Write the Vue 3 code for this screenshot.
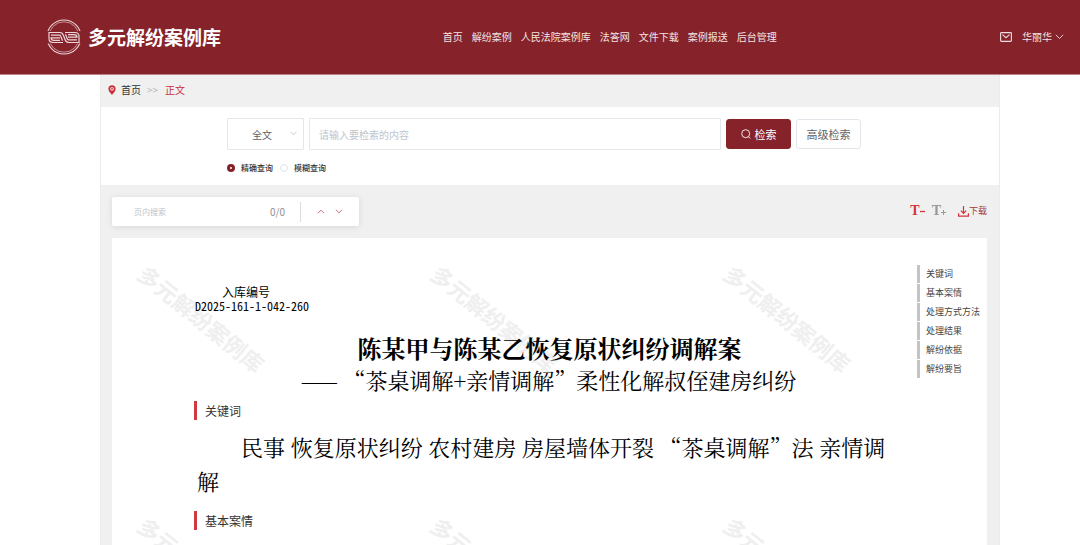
<script setup>
import { ref } from 'vue'

const nav = ['首页', '解纷案例', '人民法院案例库', '法答网', '文件下载', '案例报送', '后台管理']
const toc = ['关键词', '基本案情', '处理方式方法', '处理结果', '解纷依据', '解纷要旨']
const mode = ref('exact')
const keyword = ref('')
const inPage = ref('')
</script>

<template>
  <div class="page">
    <header class="top">
      <a class="brand" href="#">
        <svg class="emblem" viewBox="0 0 36 36" fill="none" stroke="#ecd6d8" aria-hidden="true">
          <circle cx="18" cy="18" r="17" stroke-width="1.1" />
          <circle cx="18" cy="18" r="15.200" stroke-width=".8" opacity=".8" />
          <rect x="0" y="12" width="36" height="12.500" fill="#85222a" stroke="none" />
          <g stroke-width="1.200">
            <path d="M17 23.500H7q-4 0-4-4V13.500h11q2.500 0 3.500 3l1.500 4q1 3 4 3h10v-6q0-4-4-4h-10" />
            <path d="M14 21.300H8q-3 0-3-2.500h9M5 16.200h8.500q1 0 1.500 1.500l1.500 4" />
            <path d="M22 15.700h6q3 0 3 2.500h-9M31 20.800h-8.500q-1 0-1.500-1.500l-1.500-4" />
          </g>
        </svg>
        <span>多元解纷案例库</span>
      </a>
      <nav class="nav">
        <a v-for="n in nav" :key="n" href="#">{{ n }}</a>
      </nav>
      <div class="user">
        <button class="plain" type="button" aria-label="消息">
          <svg width="12" height="10" viewBox="0 0 12 10" fill="none" stroke="#f0dfe0" stroke-width="1.1">
            <rect x=".6" y=".6" width="10.8" height="8.8" rx=".8" />
            <path d="M2.5 2.7 6 5.7l3.500-3" />
          </svg>
        </button>
        <button class="plain account" type="button">
          <span>华丽华</span>
          <svg width="9" height="6" viewBox="0 0 9 6" fill="none" stroke="#e5c8ca"><path d="M.8.8 4.500 4.500 8.200.8" /></svg>
        </button>
      </div>
    </header>

    <main class="main">
      <nav class="crumbs" aria-label="路径">
        <svg width="8" height="10" viewBox="0 0 8 10"><path d="M4 .3a3.600 3.600 0 0 0-3.600 3.600C.4 6.300 4 9.700 4 9.700s3.600-3.400 3.600-5.800A3.600 3.600 0 0 0 4 .3z" fill="#c9303a" /><circle cx="4" cy="3.800" r="1.900" fill="#f3c9cb" /><circle cx="4" cy="3.800" r=".8" fill="#c9303a" /></svg>
        <a href="#">首页</a>
        <span class="sep">&gt;&gt;</span>
        <a class="current" href="#">正文</a>
      </nav>

      <form class="search" @submit.prevent>
        <div class="row">
          <div class="select-wrap">
            <select aria-label="检索范围"><option>全文</option></select>
            <svg width="7" height="5" viewBox="0 0 7 5" fill="none" stroke="#c9ccd2"><path d="M.5.8 3.500 3.800 6.500.8" /></svg>
          </div>
          <input v-model="keyword" class="query" type="text" aria-label="检索内容" placeholder="请输入要检索的内容" />
          <button class="btn primary" type="submit">
            <svg width="10" height="10" viewBox="0 0 10 10" fill="none" stroke="#f5e6e7"><circle cx="4.700" cy="4.700" r="4" /><path d="M7.400 7.600 9.300 9.500" /></svg>
            <span>检索</span>
          </button>
          <button class="btn" type="button">高级检索</button>
        </div>
        <div class="modes">
          <label><input v-model="mode" type="radio" value="exact" name="mode" />精确查询</label>
          <label><input v-model="mode" type="radio" value="fuzzy" name="mode" />模糊查询</label>
        </div>
      </form>

      <section class="body">
        <div class="tools">
          <div class="find">
            <input v-model="inPage" type="text" aria-label="页内搜索" placeholder="页内搜索" />
            <span class="count">0/0</span>
            <button class="plain" type="button" aria-label="上一个"><svg width="8" height="5" viewBox="0 0 8 5" fill="none" stroke="#c4767c"><path d="M.8 4.300 4 1.200l3.200 3.100" /></svg></button>
            <button class="plain" type="button" aria-label="下一个"><svg width="8" height="5" viewBox="0 0 8 5" fill="none" stroke="#c4767c"><path d="M.8.7 4 3.800 7.200.7" /></svg></button>
          </div>
          <div class="actions">
            <button class="plain font minus" type="button" aria-label="缩小字号">T<svg width="5" height="10" viewBox="0 0 5 10" stroke="currentColor" stroke-width="1.300"><path d="M0 5.500h5" /></svg></button>
            <button class="plain font plus" type="button" aria-label="放大字号">T<svg width="5" height="10" viewBox="0 0 5 10" stroke="currentColor"><path d="M0 6.500h5M2.500 4v5" /></svg></button>
            <button class="plain download" type="button">
              <svg width="11" height="11" viewBox="0 0 11 11" fill="none" stroke="#d4333a" stroke-width="1.200"><path d="M5.500 0v7M2.800 4.600l2.700 2.700 2.700-2.700M.6 7.200v2.900h9.800V7.200" /></svg>
              <span>下载</span>
            </button>
          </div>
        </div>

        <article class="doc">
          <div class="marks" aria-hidden="true">
            <span v-for="i in 6" :key="i">多元解纷案例库</span>
          </div>
          <div class="content">
            <div class="number">
              <span>入库编号</span>
              <span class="code">D2025-161-1-042-260</span>
            </div>
            <h1>陈某甲与陈某乙恢复原状纠纷调解案</h1>
            <p class="subtitle">—— “茶桌调解+亲情调解”柔性化解叔侄建房纠纷</p>
            <h2>关键词</h2>
            <p class="words">民事 恢复原状纠纷 农村建房 房屋墙体开裂 “茶桌调解”法 亲情调解</p>
            <h2>基本案情</h2>
          </div>
          <ul class="toc">
            <li v-for="t in toc" :key="t"><a href="#">{{ t }}</a></li>
          </ul>
        </article>
      </section>
    </main>
  </div>
</template>

<style>
body {
  margin: 0;
  background: #fff;
}
</style>

<style scoped>
.page,
.page input,
.page select,
.page button {
  font-family: "Noto Sans CJK SC", "Noto Sans", sans-serif;
}
.page * {
  box-sizing: border-box;
}
.page {
  font-size: 10px;
  line-height: 16px;
  color: #333;
}
a {
  color: inherit;
  text-decoration: none;
}
svg {
  display: block;
  flex: none;
}
.plain {
  border: 0;
  background: none;
  padding: 0;
  color: inherit;
  font-size: inherit;
  line-height: inherit;
  display: flex;
  align-items: center;
}
.top {
  height: 75px;
  background: #85222a;
  border-bottom: 1px solid #b98388;
  color: #f3e4e5;
  display: grid;
  grid-template-columns: 29fr auto 21fr;
  align-items: center;
  padding: 0 16px 0 46px;
}
.brand {
  display: flex;
  align-items: center;
  gap: 6px;
  font-size: 19px;
  line-height: 28px;
  font-weight: 700;
  color: #fff;
}
.emblem {
  width: 36px;
  height: 36px;
}
.nav {
  display: flex;
  gap: 9px;
}
.user {
  display: flex;
  justify-content: flex-end;
  gap: 10px;
}
.account {
  gap: 3px;
}
.main {
  margin: 0 80px 0 100px;
  border: 1px solid #ebebeb;
  border-width: 0 1px;
}
.crumbs {
  height: 32px;
  background: #f0f0f0;
  display: flex;
  align-items: center;
  padding: 0 7px 2px;
}
.crumbs a:first-of-type {
  margin-left: 5px;
}
.sep {
  margin: 0 7px 0 6px;
  color: #b4b6bc;
}
.crumbs .current {
  color: #c9303a;
}
.search {
  padding: 11px 138px 9px 126px;
}
.row {
  display: flex;
  align-items: center;
  gap: 5px;
}
.select-wrap {
  position: relative;
  width: 77px;
}
.select-wrap svg {
  position: absolute;
  right: 7px;
  top: 13px;
  pointer-events: none;
}
select,
.query {
  height: 32px;
  border: 1px solid #e6e6ea;
  border-radius: 1px;
  background: #fff;
  font-size: 10px;
  color: #606266;
}
select {
  appearance: none;
  width: 100%;
  padding: 0 10px 0 24px;
}
.query {
  flex: 1;
  min-width: 0;
  padding: 0 9px;
}
input::placeholder {
  color: #c0c4cc;
  opacity: 1;
}
.btn {
  height: 30px;
  width: 65px;
  padding: 0;
  border: 1px solid #e4e5ea;
  border-radius: 3px;
  background: #fff;
  color: #606266;
  font-size: 11px;
  display: flex;
  align-items: center;
  justify-content: center;
  gap: 4px;
}
.primary {
  background: #85222a;
  border-color: #85222a;
  color: #fff;
}
.modes {
  display: flex;
  gap: 7px;
  margin-top: 10px;
  font-size: 8px;
  font-weight: 500;
}
.modes label {
  display: flex;
  align-items: center;
  gap: 6px;
}
.modes input {
  appearance: none;
  width: 8px;
  height: 8px;
  margin: 0;
  border: 1px solid #e0e2e6;
  border-radius: 50%;
  background: #fff;
}
.modes input:checked {
  border: 3px solid #85222a;
}
.body {
  background: #f0f0f0;
  padding: 12px 12px 0 11px;
}
.tools {
  display: flex;
  justify-content: space-between;
}
.find {
  display: flex;
  align-items: center;
  width: 247px;
  height: 29px;
  padding-right: 16px;
  background: #fff;
  border-radius: 2px;
  box-shadow: 0 1px 6px rgba(0, 0, 0, 0.1);
}
.find input {
  flex: 1;
  min-width: 0;
  border: 0;
  background: none;
  padding: 0 0 0 22px;
  font-size: 8px;
}
.count {
  color: #8d8f94;
  padding-right: 15px;
  border-right: 1px solid #dcdcdf;
  line-height: 20px;
  margin-right: 16px;
}
.find .plain + .plain {
  margin-left: 10px;
}
.actions {
  display: flex;
  align-items: center;
  height: 28px;
}
.page .font {
  font-family: "Liberation Serif", serif;
  font-weight: 700;
  font-size: 14px;
  margin-right: 7px;
}
.minus {
  color: #d4333a;
}
.plus {
  color: #999;
}
.download {
  margin-left: 5px;
  font-size: 9px;
  color: #a03b42;
}
.doc {
  position: relative;
  overflow: hidden;
  display: flex;
  justify-content: space-between;
  margin-top: 12px;
  background: #fff;
  color: #000;
}
.marks {
  position: absolute;
  inset: 0;
  display: grid;
  grid-template-columns: repeat(3, 293px);
  grid-auto-rows: 252px;
  pointer-events: none;
}
.marks span {
  width: 154px;
  margin: 62px 0 0 13px;
  height: 36px;
  font-size: 22px;
  line-height: 36px;
  font-weight: 700;
  white-space: nowrap;
  color: #efefef;
  transform: rotate(39deg);
}
.content {
  position: relative;
  flex: 1;
  min-width: 0;
  padding: 47px 0 15px 82px;
}
.number {
  display: inline-flex;
  flex-direction: column;
  padding-left: 1px;
  font-size: 12px;
  line-height: 14px;
}
.number span:first-child {
  padding-left: 27px;
}
.code {
  font-family: "Noto Sans Mono CJK SC", "Noto Sans CJK SC", sans-serif;
}
h1 {
  margin: 18px 0 0;
  padding-right: 12px;
  font-family: "Noto Serif CJK SC", "Noto Sans CJK SC", serif;
  font-size: 24px;
  line-height: 34px;
  font-weight: 700;
  text-align: center;
}
.subtitle {
  margin: 0 0 6px;
  padding-right: 14px;
  font-family: "Noto Serif CJK SC", "Noto Sans CJK SC", serif;
  font-size: 22px;
  line-height: 30px;
  font-weight: 400;
  text-align: center;
}
h2 {
  margin: 0;
  padding-left: 8px;
  border-left: 3px solid #cf3a42;
  font-size: 12px;
  line-height: 19px;
  font-weight: 400;
  color: #333;
}
.words {
  margin: 10px 0 13px;
  padding: 0 20px 0 3px;
  font-family: "Noto Serif CJK SC", "Noto Sans CJK SC", serif;
  font-size: 22px;
  line-height: 34px;
  font-weight: 400;
  text-indent: 2em;
}
.toc {
  position: relative;
  list-style: none;
  width: 70px;
  margin: 27px 0 0;
  padding: 0;
  font-size: 9px;
  color: #444;
}
.toc li {
  border-left: 3px solid #c4c4c4;
  padding-left: 6px;
  line-height: 18px;
  margin-bottom: 1px;
  white-space: nowrap;
}
</style>
